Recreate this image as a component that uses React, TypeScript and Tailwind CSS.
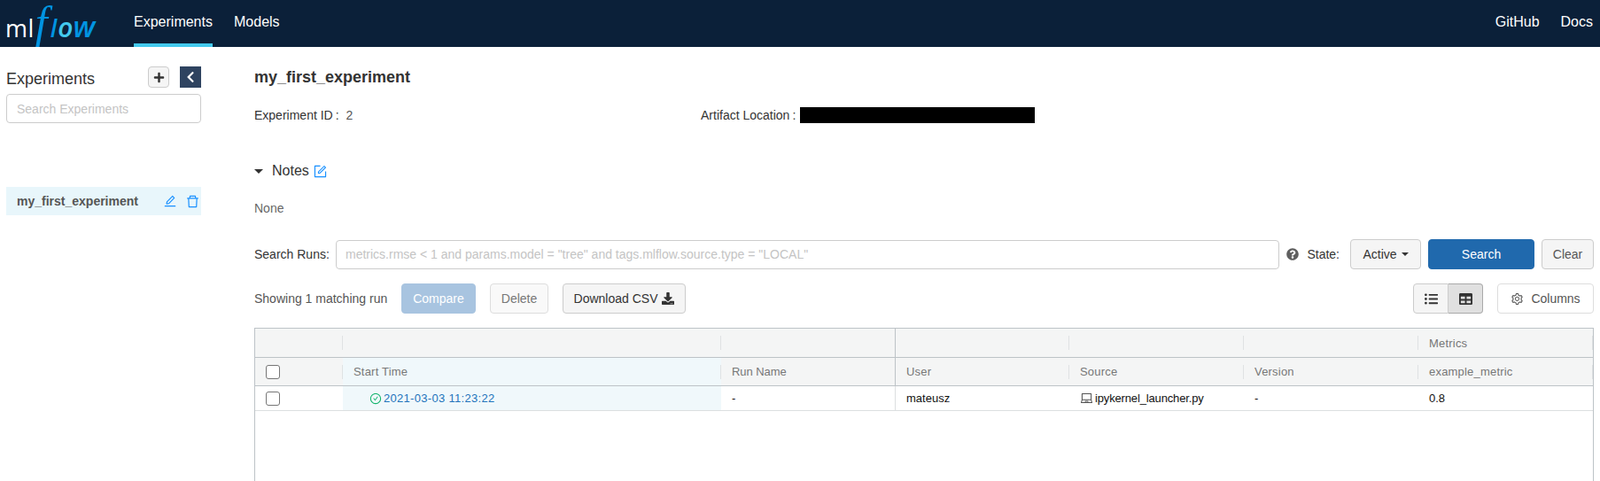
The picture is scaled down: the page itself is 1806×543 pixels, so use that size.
import { FaChevronLeft, FaPlus, FaDownload, FaQuestionCircle, FaListUl, FaTable } from "react-icons/fa";
import { AiOutlineEdit, AiOutlineDelete, AiOutlineForm, AiOutlineSetting, AiOutlineLaptop, AiOutlineCheckCircle } from "react-icons/ai";

const font = "font-['Liberation_Sans',Arial,sans-serif]";

function Logo() {
  return (
    <div className="flex items-baseline w-[151px] pl-[6px] h-[53px] pt-[1px] select-none">
      <span className="font-['Open_Sans',sans-serif] font-medium text-[27px] leading-[40px] tracking-[0.5px] text-white">ml</span>
      <span className="font-['Liberation_Serif',serif] italic text-[50px] leading-[48px] text-[#0194e2] pl-[8px] pr-[6px] ml-[-7px] mr-[-5px]">f</span>
      <span className="font-['Open_Sans',sans-serif] italic font-semibold text-[27px] leading-[40px] text-[#0194e2] ml-[2px]">l</span>
      <span className="font-['Open_Sans',sans-serif] italic font-semibold text-[30px] leading-[40px] text-[#43c9ed] ml-[1px]">o</span>
      <span className="font-['Open_Sans',sans-serif] italic font-semibold text-[33px] leading-[40px] text-[#0194e2]">w</span>
    </div>
  );
}

function Header() {
  return (
    <header className="h-[53px] bg-[#0b2039] flex items-stretch text-white text-[16px]">
      <Logo />
      <a className="w-[89px] flex items-center justify-center border-b-[4px] border-[#43c9ed] pt-[1px]">Experiments</a>
      <a className="ml-[24px] flex items-center pb-[3px]">Models</a>
      <div className="ml-auto flex items-center gap-[24px] pr-[8px] pb-[3px]">
        <a>GitHub</a>
        <a>Docs</a>
      </div>
    </header>
  );
}

function Sidebar() {
  return (
    <aside className="w-[220px] ml-[7px] shrink-0 pt-[22px]">
      <div className="flex items-center h-[24px]">
        <span className="text-[18px] text-[#333] leading-none pt-[3px]">Experiments</span>
        <button className="ml-auto w-[24px] h-[24px] rounded-[4px] border border-[#ccc] bg-[#f5f5f5] flex items-center justify-center text-[#333]">
          <FaPlus size={13} />
        </button>
        <button className="ml-[12px] w-[24px] h-[24px] bg-[#2e4360] flex items-center justify-center text-white">
          <FaChevronLeft size={14} />
        </button>
      </div>
      <input
        placeholder="Search Experiments"
        className="mt-[7px] w-full h-[33px] rounded-[4px] border border-[#ccc] px-[11px] text-[14px] placeholder:text-[#c4c4c4] outline-none"
      />
      <div className="mt-[72px] h-[32px] bg-[#e8f6fb] flex items-center pl-[12px] pr-[1px]">
        <span className="font-bold text-[14px] text-[#555] flex-1">my_first_experiment</span>
        <AiOutlineEdit size={16} className="text-[#1890ff] mr-[9px]" />
        <AiOutlineDelete size={17} className="text-[#1890ff]" />
      </div>
    </aside>
  );
}

function Btn({ className, children }: { className: string; children: React.ReactNode }) {
  return (
    <button className={"h-[34px] rounded-[4px] border text-[14px] flex items-center justify-center " + className}>
      {children}
    </button>
  );
}

const gridCols = "grid grid-cols-[99px_427px_197px_196px_197px_197px_197px]";

function HeadCell({ children, active, strong, sep = true }: { children?: React.ReactNode; active?: boolean; strong?: boolean; sep?: boolean }) {
  return (
    <div className={"relative flex items-center px-[12px] text-[13px] font-medium tracking-[0.2px] text-[#777] " + (active ? "bg-[#f0f8fb] " : "") + (strong ? "border-r border-[#bdc3c7]" : "")}>
      {children}
      {sep && <span className="absolute right-0 top-[8px] h-[16px] w-[1px] bg-[#dfe2e3]" />}
    </div>
  );
}

function Box() {
  return <span className="w-[16px] h-[16px] rounded-[3px] border border-[#767676] bg-white" />;
}

function RunsTable() {
  return (
    <div className="mt-[16px] h-[180px] border border-b-0 border-[#bdc3c7] text-[13px]">
      <div className={gridCols + " h-[33px] bg-[#f4f5f5] border-b border-[#bdc3c7]"}>
        <HeadCell />
        <HeadCell />
        <HeadCell strong sep={false} />
        <HeadCell />
        <HeadCell />
        <HeadCell />
        <HeadCell><span className="pt-[1px]">Metrics</span></HeadCell>
      </div>
      <div className={gridCols + " h-[32px] bg-[#f4f5f5] border-b border-[#bdc3c7]"}>
        <HeadCell><Box /></HeadCell>
        <HeadCell active>Start Time</HeadCell>
        <HeadCell strong sep={false}><span className="tracking-[-0.05px]">Run Name</span></HeadCell>
        <HeadCell>User</HeadCell>
        <HeadCell>Source</HeadCell>
        <HeadCell>Version</HeadCell>
        <HeadCell>example_metric</HeadCell>
      </div>
      <div className={gridCols + " h-[28px] border-b border-[#dcdfe0] text-[#111]"}>
        <div className="flex items-center px-[12px]"><Box /></div>
        <div className="flex items-center bg-[#f0f8fb] pl-[30px] text-[#2374bb] tracking-[0.3px]">
          <AiOutlineCheckCircle size={14} className="text-[#10b36b] mr-[2px]" />
          2021-03-03 11:23:22
        </div>
        <div className="flex items-center px-[12px] border-r border-[#dcdfe0]">-</div>
        <div className="flex items-center px-[12px]">mateusz</div>
        <div className="flex items-center px-[12px] tracking-[-0.15px]">
          <AiOutlineLaptop size={15} className="text-[#555] mr-[2px]" />
          ipykernel_launcher.py
        </div>
        <div className="flex items-center px-[12px]">-</div>
        <div className="flex items-center px-[12px]">0.8</div>
      </div>
    </div>
  );
}

function Main() {
  return (
    <main className="flex-1 ml-[60px] mr-[7px] min-w-0">
      <h1 className="pt-[24px] text-[18px] leading-[20px] font-bold text-[#333]">my_first_experiment</h1>
      <div className="mt-[23px] flex items-center h-[20px] text-[14px] text-[#333]">
        <span className="w-[504px]">Experiment ID<span className="ml-[3px]">:</span><span className="ml-[8px] text-[#555]">2</span></span>
        <span>Artifact Location<span className="ml-[3px]">:</span></span>
        <span className="ml-[5px] w-[265px] h-[18px] bg-black" />
      </div>
      <div className="mt-[43px] flex items-center h-[20px] text-[16px] text-[#333]">
        <span className="w-0 h-0 border-x-[5px] border-x-transparent border-t-[5px] border-t-[#333] mr-[10px]" />
        <span>Notes</span>
        <AiOutlineForm size={17} className="ml-[4px] text-[#1890ff]" />
      </div>
      <p className="mt-[22px] text-[14px] leading-[20px] text-[#666]">None</p>

      <div className="mt-[25px] flex items-center h-[34px] text-[14px] text-[#333]">
        <span className="w-[92px]">Search Runs:</span>
        <input
          placeholder={'metrics.rmse < 1 and params.model = "tree" and tags.mlflow.source.type = "LOCAL"'}
          className="flex-1 h-[33px] rounded-[4px] border border-[#ccc] px-[10px] text-[14px] placeholder:text-[#c4c4c4] outline-none"
        />
        <FaQuestionCircle size={14} className="ml-[8px] text-[#5f5f5f]" />
        <span className="ml-[9px] mr-[12px]">State:</span>
        <Btn className="w-[80px] bg-[#f5f5f5] border-[#ccc] text-[#333]">
          Active
          <span className="ml-[5px] w-0 h-0 border-x-[4px] border-x-transparent border-t-[4px] border-t-[#333]" />
        </Btn>
        <Btn className="ml-[8px] w-[120px] bg-[#2069ad] border-[#2069ad] text-white font-medium">Search</Btn>
        <Btn className="ml-[8px] w-[59px] bg-[#f5f5f5] border-[#ccc] text-[#555]">Clear</Btn>
      </div>

      <div className="mt-[16px] flex items-center h-[34px] text-[14px]">
        <span className="w-[166px] text-[#555]">Showing 1 matching run</span>
        <Btn className="w-[84px] bg-[#a8c4e0] border-[#a8c4e0] text-white font-medium">Compare</Btn>
        <Btn className="ml-[16px] w-[66px] bg-[#f9f9f9] border-[#ddd] text-[#777]">Delete</Btn>
        <Btn className="ml-[16px] w-[139px] bg-[#f5f5f5] border-[#ccc] text-[#333]">
          Download CSV
          <FaDownload size={14} className="ml-[5px]" />
        </Btn>
        <div className="ml-auto flex">
          <button className="w-[40px] h-[34px] rounded-l-[4px] border border-[#ccc] bg-[#f5f5f5] flex items-center justify-center text-[#333]">
            <FaListUl size={15} />
          </button>
          <button className="w-[39px] h-[34px] rounded-r-[4px] border border-l-0 border-[#aaa] bg-[#e0e0e0] flex items-center justify-center text-[#333]">
            <FaTable size={15} />
          </button>
        </div>
        <Btn className="ml-[16px] w-[109px] bg-white border-[#ddd] text-[#555]">
          <AiOutlineSetting size={15} className="mr-[8px]" />
          Columns
        </Btn>
      </div>
      <RunsTable />
    </main>
  );
}

export default function App() {
  return (
    <div className={font + " w-[1806px] h-[543px] overflow-hidden bg-white"}>
      <Header />
      <div className="flex">
        <Sidebar />
        <Main />
      </div>
    </div>
  );
}
